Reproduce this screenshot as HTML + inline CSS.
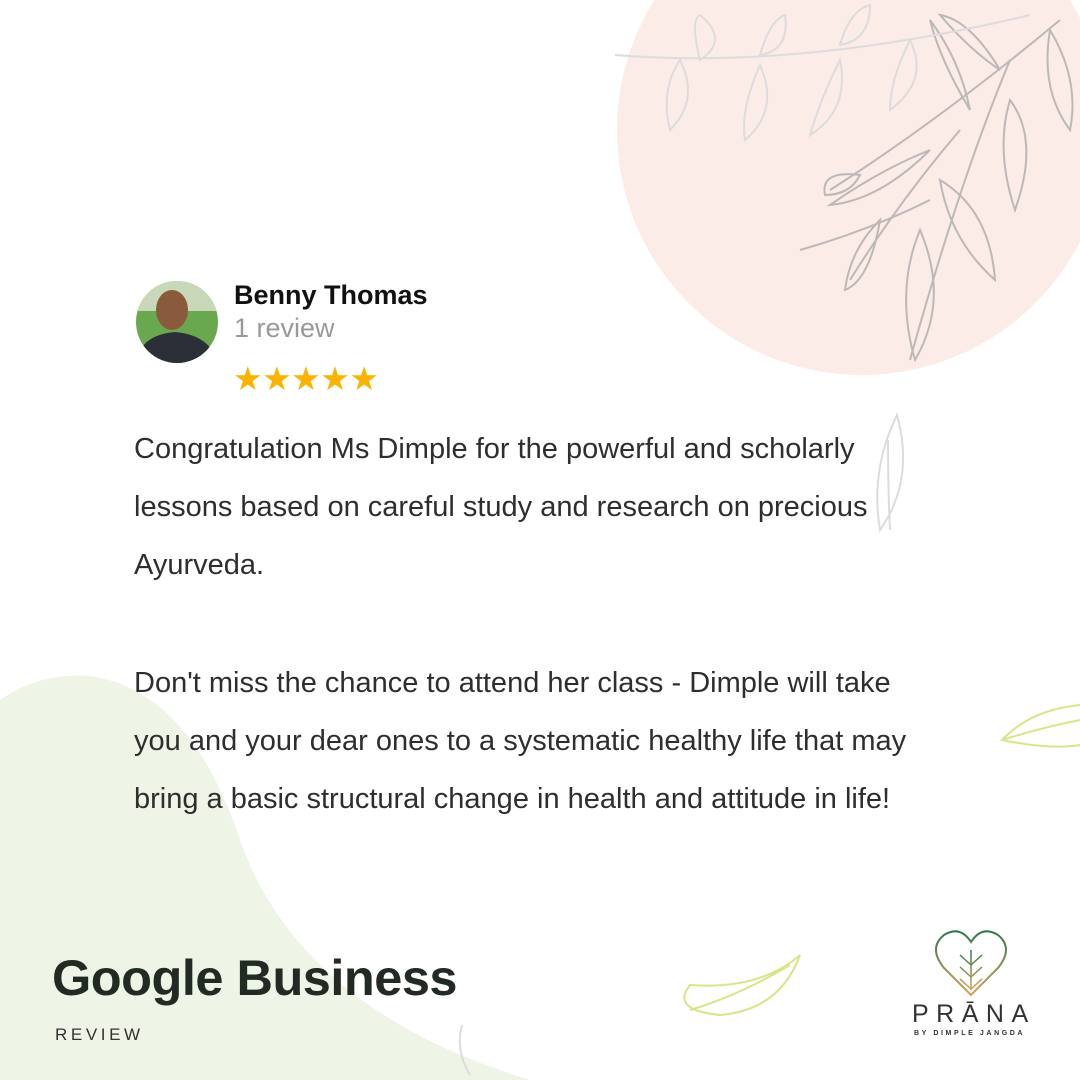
<!DOCTYPE html>
<html><head><meta charset="utf-8"><style>
body{margin:0;width:1080px;height:1080px;position:relative;overflow:hidden;background:#fff;font-family:"Liberation Sans",Arial,sans-serif}
.abs{position:absolute}
.p{left:134px;font-size:29px;color:#2e2e2e;line-height:58px;width:900px;white-space:nowrap}
</style></head><body>
<svg class="abs" style="left:0;top:0" width="1080" height="1080">
<circle cx="862" cy="130" r="245" fill="#fbece8"/>
<path d="M0 700 Q40 672 90 676 Q190 690 240 840 Q300 1010 530 1080 L0 1080Z" fill="#eef4e6"/>
<g fill="none" stroke="#bdb8b8" stroke-width="2">
<path d="M1060 20 Q940 120 830 190 M1010 60 Q960 180 910 360 M960 130 Q900 200 850 280 M930 200 Q870 230 800 250"/>
<path d="M1050 30 Q1080 80 1070 130 Q1040 90 1050 30Z M1010 100 Q1040 140 1015 210 Q995 150 1010 100Z M940 180 Q990 210 995 280 Q950 240 940 180Z M920 230 Q950 300 915 360 Q895 290 920 230Z M880 220 Q870 280 845 290 Q850 250 880 220Z M860 175 Q820 170 825 195 Q850 195 860 175Z M930 150 Q880 170 830 205 Q880 200 930 150Z M970 110 Q940 60 930 20 Q960 60 970 110Z M1000 70 Q970 20 940 15 Q970 50 1000 70Z"/>
</g>
<g fill="none" stroke="#dcdcdc" stroke-width="2">
<path d="M615 55 Q800 70 1030 15 M700 60 Q690 20 700 15 Q730 40 700 60Z M760 55 Q770 20 785 15 Q790 50 760 55Z M840 45 Q850 10 870 5 Q870 40 840 45Z M680 60 Q660 90 670 130 Q700 100 680 60Z M760 65 Q740 110 745 140 Q780 110 760 65Z M840 60 Q820 100 810 135 Q850 110 840 60Z M910 40 Q890 80 890 110 Q930 80 910 40Z"/>
<path d="M897 415 Q870 470 880 530 Q915 480 897 415Z M888 440 Q888 490 890 530"/>
<path d="M462 1025 Q455 1050 470 1075"/>
</g>
<g fill="none" stroke="#dbe489" stroke-width="2">
<path d="M800 955 Q760 990 690 985 Q670 1010 720 1015 Q780 1010 800 955Z M690 1010 Q740 995 790 965"/>
<path d="M1080 705 Q1030 710 1002 740 Q1050 750 1080 745 M1002 740 Q1040 728 1080 720"/>
</g>
<defs><clipPath id="c"><circle cx="177" cy="322" r="41"/></clipPath><linearGradient id="g" x1="0" y1="0" x2="0" y2="1"><stop offset="0" stop-color="#2f7a4a"/><stop offset="1" stop-color="#d8a05a"/></linearGradient></defs>
<g clip-path="url(#c)"><rect x="136" y="281" width="82" height="82" fill="#6aa84f"/><rect x="136" y="281" width="82" height="30" fill="#c9d8b8"/><ellipse cx="172" cy="310" rx="16" ry="20" fill="#8a5a3c"/><path d="M136 363 Q140 335 175 332 Q210 335 218 363Z" fill="#2b2f38"/></g>
<path d="M971 995 L944 968 Q928 948 944 935 Q960 925 971 942 Q982 925 998 935 Q1014 948 998 968Z" fill="none" stroke="url(#g)" stroke-width="2"/>
<path d="M971 950 V990 M960 955 L971 965 L982 955 M960 967 L971 977 L982 967 M960 979 L971 989 L982 979" fill="none" stroke="url(#g)" stroke-width="1.5"/>
</svg>
<div class="abs" style="left:234px;top:280px;font-size:27px;font-weight:bold;color:#111">Benny Thomas</div>
<div class="abs" style="left:234px;top:313px;font-size:27px;color:#999">1 review</div>
<div class="abs" style="left:233px;top:359px;font-size:33px;color:#f9b300;letter-spacing:-0.5px">★★★★★</div>
<div class="abs p" style="top:420px">Congratulation Ms Dimple for the powerful and scholarly<br>lessons based on careful study and research on precious<br>Ayurveda.</div>
<div class="abs p" style="top:654px">Don't miss the chance to attend her class - Dimple will take<br>you and your dear ones to a systematic healthy life that may<br>bring a basic structural change in health and attitude in life!</div>
<div class="abs" style="left:52px;top:948px;font-size:50.5px;font-weight:bold;color:#222a24;letter-spacing:-0.5px">Google Business</div>
<div class="abs" style="left:55px;top:1025px;font-size:17px;color:#333;letter-spacing:3.6px">REVIEW</div>
<div class="abs" style="left:912px;top:1000px;font-size:25px;color:#333;letter-spacing:7.5px">PRĀNA</div>
<div class="abs" style="left:914px;top:1030px;font-size:7px;color:#333;letter-spacing:2.6px;font-weight:bold">BY DIMPLE JANGDA</div>
</body></html>
